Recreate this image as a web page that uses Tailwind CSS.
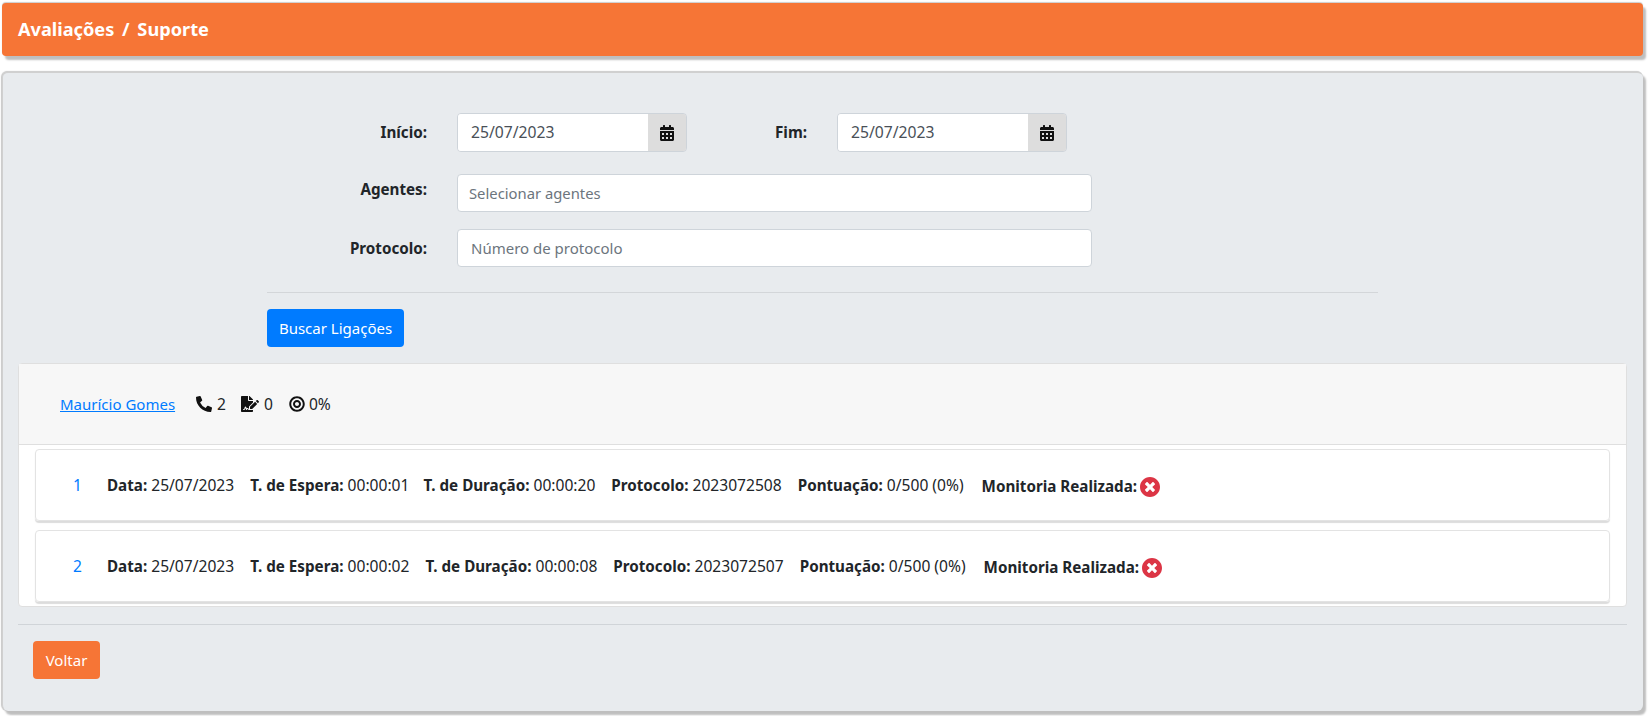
<!DOCTYPE html>
<html lang="pt">
<head>
<meta charset="utf-8">
<script src="https://cdn.jsdelivr.net/npm/@tailwindcss/browser@4"></script>
</head>
<body class="bg-white font-['Noto_Sans',sans-serif] text-[15px] text-[#212529] overflow-hidden">
<div class="w-[1651px] h-[716px] pt-[3px] pl-[2px] pr-[8px]">
  <header class="h-[53px] bg-[#f67536] rounded-[4px] shadow-[3px_4px_2px_#bfbfbf,0_-1px_1px_#ccc] flex items-center pl-[16px]">
    <h1 class="text-[18.2px] font-bold text-white [word-spacing:3px]">Avaliações / Suporte</h1>
  </header>
  <main class="mt-[15px] h-[640px] bg-[#e8ebee] rounded-[6px] border-t-2 border-l border-[#d0d0d0] shadow-[3px_4px_2px_#bfbfbf,-1px_0_1px_#c8c8c8] pl-[15px] pr-[16px]">
    <form class="ml-[249px] pt-[40px] w-[1111px]">
      <div class="flex items-center h-[39px]">
        <label class="w-[160px] text-right font-bold text-[15.2px]">Início:</label>
        <div class="ml-[30px] w-[230px] h-[39px] flex rounded-[4px] border border-[#ced4da] overflow-hidden">
          <div class="flex-1 bg-white pl-[13px] flex items-center text-[#495057] text-[15.7px]">25/07/2023</div>
          <div class="w-[38px] bg-[#dddddd] flex items-center justify-center">
            <svg class="w-[14px] h-[16px]" viewBox="0 0 448 512" fill="#111"><path d="M0 464c0 26.5 21.5 48 48 48h352c26.5 0 48-21.5 48-48V192H0v272zm320-196c0-6.6 5.4-12 12-12h40c6.6 0 12 5.4 12 12v40c0 6.6-5.4 12-12 12h-40c-6.6 0-12-5.4-12-12v-40zm0 128c0-6.6 5.4-12 12-12h40c6.6 0 12 5.4 12 12v40c0 6.6-5.4 12-12 12h-40c-6.6 0-12-5.4-12-12v-40zM192 268c0-6.6 5.4-12 12-12h40c6.6 0 12 5.4 12 12v40c0 6.6-5.4 12-12 12h-40c-6.6 0-12-5.4-12-12v-40zm0 128c0-6.6 5.4-12 12-12h40c6.6 0 12 5.4 12 12v40c0 6.6-5.4 12-12 12h-40c-6.6 0-12-5.4-12-12v-40zM64 268c0-6.6 5.4-12 12-12h40c6.6 0 12 5.4 12 12v40c0 6.6-5.4 12-12 12H76c-6.6 0-12-5.4-12-12v-40zm0 128c0-6.6 5.4-12 12-12h40c6.6 0 12 5.4 12 12v40c0 6.6-5.4 12-12 12H76c-6.6 0-12-5.4-12-12v-40zM400 64h-48V16c0-8.8-7.2-16-16-16h-32c-8.8 0-16 7.2-16 16v48H160V16c0-8.8-7.2-16-16-16h-32c-8.8 0-16 7.2-16 16v48H48C21.5 64 0 85.5 0 112v48h448v-48c0-26.5-21.5-48-48-48z"/></svg>
          </div>
        </div>
        <label class="w-[120px] text-right font-bold text-[15.2px]">Fim:</label>
        <div class="ml-[30px] w-[230px] h-[39px] flex rounded-[4px] border border-[#ced4da] overflow-hidden">
          <div class="flex-1 bg-white pl-[13px] flex items-center text-[#495057] text-[15.7px]">25/07/2023</div>
          <div class="w-[38px] bg-[#dddddd] flex items-center justify-center">
            <svg class="w-[14px] h-[16px]" viewBox="0 0 448 512" fill="#111"><path d="M0 464c0 26.5 21.5 48 48 48h352c26.5 0 48-21.5 48-48V192H0v272zm320-196c0-6.6 5.4-12 12-12h40c6.6 0 12 5.4 12 12v40c0 6.6-5.4 12-12 12h-40c-6.6 0-12-5.4-12-12v-40zm0 128c0-6.6 5.4-12 12-12h40c6.6 0 12 5.4 12 12v40c0 6.6-5.4 12-12 12h-40c-6.6 0-12-5.4-12-12v-40zM192 268c0-6.6 5.4-12 12-12h40c6.6 0 12 5.4 12 12v40c0 6.6-5.4 12-12 12h-40c-6.6 0-12-5.4-12-12v-40zm0 128c0-6.6 5.4-12 12-12h40c6.6 0 12 5.4 12 12v40c0 6.6-5.4 12-12 12h-40c-6.6 0-12-5.4-12-12v-40zM64 268c0-6.6 5.4-12 12-12h40c6.6 0 12 5.4 12 12v40c0 6.6-5.4 12-12 12H76c-6.6 0-12-5.4-12-12v-40zm0 128c0-6.6 5.4-12 12-12h40c6.6 0 12 5.4 12 12v40c0 6.6-5.4 12-12 12H76c-6.6 0-12-5.4-12-12v-40zM400 64h-48V16c0-8.8-7.2-16-16-16h-32c-8.8 0-16 7.2-16 16v48H160V16c0-8.8-7.2-16-16-16h-32c-8.8 0-16 7.2-16 16v48H48C21.5 64 0 85.5 0 112v48h448v-48c0-26.5-21.5-48-48-48z"/></svg>
          </div>
        </div>
      </div>
      <div class="flex mt-[22px] h-[38px]">
        <label class="w-[160px] text-right font-bold mt-[4px] text-[15.2px]">Agentes:</label>
        <input class="ml-[30px] w-[635px] h-[38px] bg-white rounded-[4px] border border-[#ced4da] pl-[11px] text-[14.8px] text-[#495057] placeholder:text-[#6c757d]" placeholder="Selecionar agentes">
      </div>
      <div class="flex items-center mt-[17px] h-[38px]">
        <label class="w-[160px] text-right font-bold text-[15.2px]">Protocolo:</label>
        <input class="ml-[30px] w-[635px] h-[38px] bg-white rounded-[4px] border border-[#ced4da] pl-[13px] text-[#495057] placeholder:text-[#6c757d]" placeholder="Número de protocolo">
      </div>
      <hr class="mt-[25px] border-t border-[#d3d6d9]">
      <button type="button" class="mt-[16px] h-[38px] w-[137px] rounded-[4px] bg-[#007bff] text-white">Buscar Ligações</button>
    </form>
    <section class="mt-[16px] h-[244px] bg-white rounded-[4px] border border-[#dfdfdf]">
      <div class="h-[81px] bg-[#f7f7f7] border-b border-[#dfdfdf] flex items-center pl-[41px]">
        <a href="#" class="text-[#007bff] underline">Maurício Gomes</a>
        <svg class="ml-[21px] w-[16px] h-[16px]" viewBox="0 0 512 512" fill="#111"><path d="M497.39 361.8l-112-48a24 24 0 0 0-28 6.9l-49.6 60.6A370.66 370.66 0 0 1 130.6 204.11l60.6-49.6a23.94 23.94 0 0 0 6.9-28l-48-112A24.16 24.16 0 0 0 122.6.61l-104 24A24 24 0 0 0 0 48c0 256.5 207.9 464 464 464a24 24 0 0 0 23.4-18.6l24-104a24.29 24.29 0 0 0-14.01-27.6z"/></svg>
        <span class="ml-[5px] mt-[2px] text-[15.6px]">2</span>
        <svg class="ml-[15px] w-[18px] h-[16px]" viewBox="0 0 576 512" fill="#111"><path d="M218.17 424.14c-2.95-5.92-8.09-6.52-10.17-6.52s-7.22.59-10.02 6.19l-7.67 15.34c-6.37 12.78-25.03 11.37-29.48-2.09L144 386.59l-10.61 31.88c-5.89 17.66-22.38 29.53-41 29.53H80c-8.84 0-16-7.16-16-16s7.16-16 16-16h12.39c4.83 0 9.11-3.08 10.64-7.66l18.19-54.64c3.3-9.81 12.44-16.41 22.78-16.41s19.48 6.59 22.77 16.41l13.88 41.64c19.75-16.19 54.06-9.7 66 14.16 1.89 3.78 5.49 5.95 9.36 6.26v-82.12l128-127.09V160H248c-13.2 0-24-10.8-24-24V0H24C10.7 0 0 10.7 0 24v464c0 13.3 10.7 24 24 24h336c13.3 0 24-10.7 24-24v-40l-128-.11c-16.12-.31-30.58-9.28-37.83-23.75zM384 121.9c0-6.3-2.5-12.4-7-16.9L279.1 7c-4.5-4.5-10.6-7-17-7H256v128h128v-6.1zm-96 225.06V416h68.99l161.68-162.78-67.88-67.88L288 346.96zm280.54-179.63l-31.87-31.87c-9.94-9.94-26.07-9.94-36.01 0l-27.25 27.25 67.88 67.88 27.25-27.25c9.95-9.94 9.95-26.07 0-36.01z"/></svg>
        <span class="ml-[5px] mt-[2px] text-[15.6px]">0</span>
        <svg class="ml-[16px] w-[16px] h-[16px]" viewBox="0 0 496 512" fill="#111"><path d="M248 8C111.03 8 0 119.03 0 256s111.03 248 248 248 248-111.03 248-248S384.97 8 248 8zm0 432c-101.69 0-184-82.29-184-184 0-101.69 82.29-184 184-184 101.69 0 184 82.29 184 184 0 101.69-82.29 184-184 184zm0-312c-70.69 0-128 57.31-128 128s57.31 128 128 128 128-57.31 128-128-57.31-128-128-128zm0 192c-35.37 0-64-28.63-64-64s28.63-64 64-64 64 28.63 64 64-28.63 64-64 64z"/></svg>
        <span class="ml-[4px] mt-[2px] text-[15.6px]">0%</span>
      </div>
      <div class="mx-[16px] mt-[4px] h-[72px] pt-[2px] rounded-[4px] border border-[#e3e3e3] shadow-[0_2px_1px_#dcdcdc] flex items-center pl-[37px] gap-x-[16px] text-[15.6px]">
        <span class="text-[#007bff] w-[18px]">1</span>
        <span><b class="text-[15.2px]">Data:</b> 25/07/2023</span>
        <span class="-mr-[2px]"><b class="text-[15.2px]">T. de Espera:</b> 00:00:01</span>
        <span><b class="text-[15.2px]">T. de Duração:</b> 00:00:20</span>
        <span><b class="text-[15.2px]">Protocolo:</b> 2023072508</span>
        <span><b class="text-[15.2px]">Pontuação:</b> 0/500 (0%)</span>
        <span class="ml-[2px] flex items-center gap-x-[3px]"><b class="text-[15.2px]">Monitoria Realizada:</b>
          <svg class="w-[20px] h-[20px] mt-[2px]" viewBox="8 8 496 496" fill="#dc3545"><path d="M256 8C119 8 8 119 8 256s111 248 248 248 248-111 248-248S393 8 256 8zm121.6 313.1c4.7 4.7 4.7 12.3 0 17L338 377.6c-4.7 4.7-12.3 4.7-17 0L256 312l-65.1 65.6c-4.7 4.7-12.3 4.7-17 0L134.4 338c-4.7-4.7-4.7-12.3 0-17l65.6-65-65.6-65.1c-4.7-4.7-4.7-12.3 0-17l39.6-39.6c4.7-4.7 12.3-4.7 17 0l65 65.7 65.1-65.6c4.7-4.7 12.3-4.7 17 0l39.6 39.6c4.7 4.7 4.7 12.3 0 17L312 256l65.6 65.1z"/></svg></span>
      </div>
      <div class="mx-[16px] mt-[9px] h-[72px] pt-[2px] rounded-[4px] border border-[#e3e3e3] shadow-[0_2px_1px_#dcdcdc] flex items-center pl-[37px] gap-x-[16px] text-[15.6px]">
        <span class="text-[#007bff] w-[18px]">2</span>
        <span><b class="text-[15.2px]">Data:</b> 25/07/2023</span>
        <span><b class="text-[15.2px]">T. de Espera:</b> 00:00:02</span>
        <span><b class="text-[15.2px]">T. de Duração:</b> 00:00:08</span>
        <span><b class="text-[15.2px]">Protocolo:</b> 2023072507</span>
        <span><b class="text-[15.2px]">Pontuação:</b> 0/500 (0%)</span>
        <span class="ml-[2px] flex items-center gap-x-[3px]"><b class="text-[15.2px]">Monitoria Realizada:</b>
          <svg class="w-[20px] h-[20px] mt-[2px]" viewBox="8 8 496 496" fill="#dc3545"><path d="M256 8C119 8 8 119 8 256s111 248 248 248 248-111 248-248S393 8 256 8zm121.6 313.1c4.7 4.7 4.7 12.3 0 17L338 377.6c-4.7 4.7-12.3 4.7-17 0L256 312l-65.1 65.6c-4.7 4.7-12.3 4.7-17 0L134.4 338c-4.7-4.7-4.7-12.3 0-17l65.6-65-65.6-65.1c-4.7-4.7-4.7-12.3 0-17l39.6-39.6c4.7-4.7 12.3-4.7 17 0l65 65.7 65.1-65.6c4.7-4.7 12.3-4.7 17 0l39.6 39.6c4.7 4.7 4.7 12.3 0 17L312 256l65.6 65.1z"/></svg></span>
      </div>
    </section>
    <hr class="mt-[17px] border-t border-[#d0d4d8]">
    <button type="button" class="mt-[16px] ml-[15px] h-[38px] w-[67px] rounded-[4px] bg-[#f67536] text-white">Voltar</button>
  </main>
</div>
</body>
</html>
